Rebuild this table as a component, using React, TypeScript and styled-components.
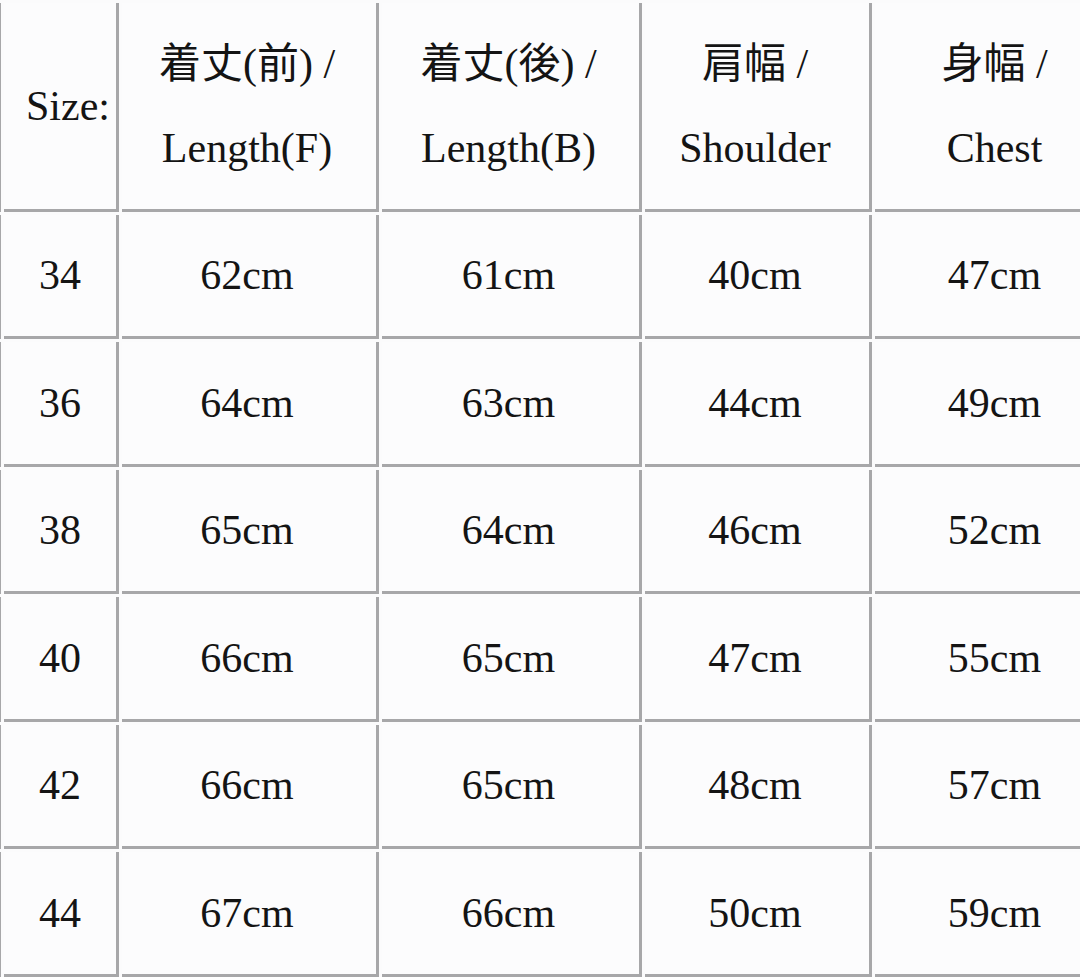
import { Fragment } from "react";
import styled, { createGlobalStyle } from "styled-components";

// Types
interface SizeRow {
  size: string;
  lengthFront: string;
  lengthBack: string;
  shoulder: string;
  chest: string;
}

const GlobalStyle = createGlobalStyle`
  html, body {
    margin: 0;
    padding: 0;
    background: #fbfbfc;
  }
  body {
    width: 1080px;
    height: 977px;
    overflow: hidden;
  }
`;

// Styled Components
const Sheet = styled.div`
  display: grid;
  grid-template-columns: 8px 115px 257px 260px 227px 246px;
  grid-template-rows: 208.5px repeat(6, 124.5px);
  column-gap: 3px;
  row-gap: 3px;
  padding-top: 3px;
  margin-left: -7px;
  font-family: "Liberation Serif", "Noto Sans CJK JP", serif;
  font-size: 42px;
  line-height: 84px;
  color: #141414;
`;

const Cell = styled.div<{ $shift?: number }>`
  display: flex;
  flex-direction: column;
  align-items: center;
  justify-content: center;
  text-align: center;
  white-space: nowrap;
  border-right: 3px solid #a7a7a9;
  border-bottom: 3px solid #a7a7a9;
  padding-left: ${(p) => p.$shift ?? 0}px;
  padding-right: 4px;
  background: #fcfcfd;
`;

// the cut-off column left of the visible table
const EdgeCell = styled.div`
  border-right: 3px solid #a7a7a9;
  border-bottom: 3px solid #a7a7a9;
`;

const HeadLine = styled.span`
  display: block;
`;

const headers: [string, string][] = [
  ["着丈(前) /", "Length(F)"],
  ["着丈(後) /", "Length(B)"],
  ["肩幅 /", "Shoulder"],
  ["身幅 /", "Chest"],
];

const rows: SizeRow[] = [
  { size: "34", lengthFront: "62cm", lengthBack: "61cm", shoulder: "40cm", chest: "47cm" },
  { size: "36", lengthFront: "64cm", lengthBack: "63cm", shoulder: "44cm", chest: "49cm" },
  { size: "38", lengthFront: "65cm", lengthBack: "64cm", shoulder: "46cm", chest: "52cm" },
  { size: "40", lengthFront: "66cm", lengthBack: "65cm", shoulder: "47cm", chest: "55cm" },
  { size: "42", lengthFront: "66cm", lengthBack: "65cm", shoulder: "48cm", chest: "57cm" },
  { size: "44", lengthFront: "67cm", lengthBack: "66cm", shoulder: "50cm", chest: "59cm" },
];

export default function App() {
  return (
    <>
      <GlobalStyle />
      <Sheet>
        <EdgeCell />
        <Cell $shift={20}>Size:</Cell>
        {headers.map(([jp, en]) => (
          <Cell key={en}>
            <HeadLine>{jp}</HeadLine>
            <HeadLine>{en}</HeadLine>
          </Cell>
        ))}
        {rows.map((row) => (
          <Fragment key={row.size}>
            <EdgeCell />
            <Cell $shift={4}>{row.size}</Cell>
            <Cell>{row.lengthFront}</Cell>
            <Cell>{row.lengthBack}</Cell>
            <Cell>{row.shoulder}</Cell>
            <Cell>{row.chest}</Cell>
          </Fragment>
        ))}
      </Sheet>
    </>
  );
}
